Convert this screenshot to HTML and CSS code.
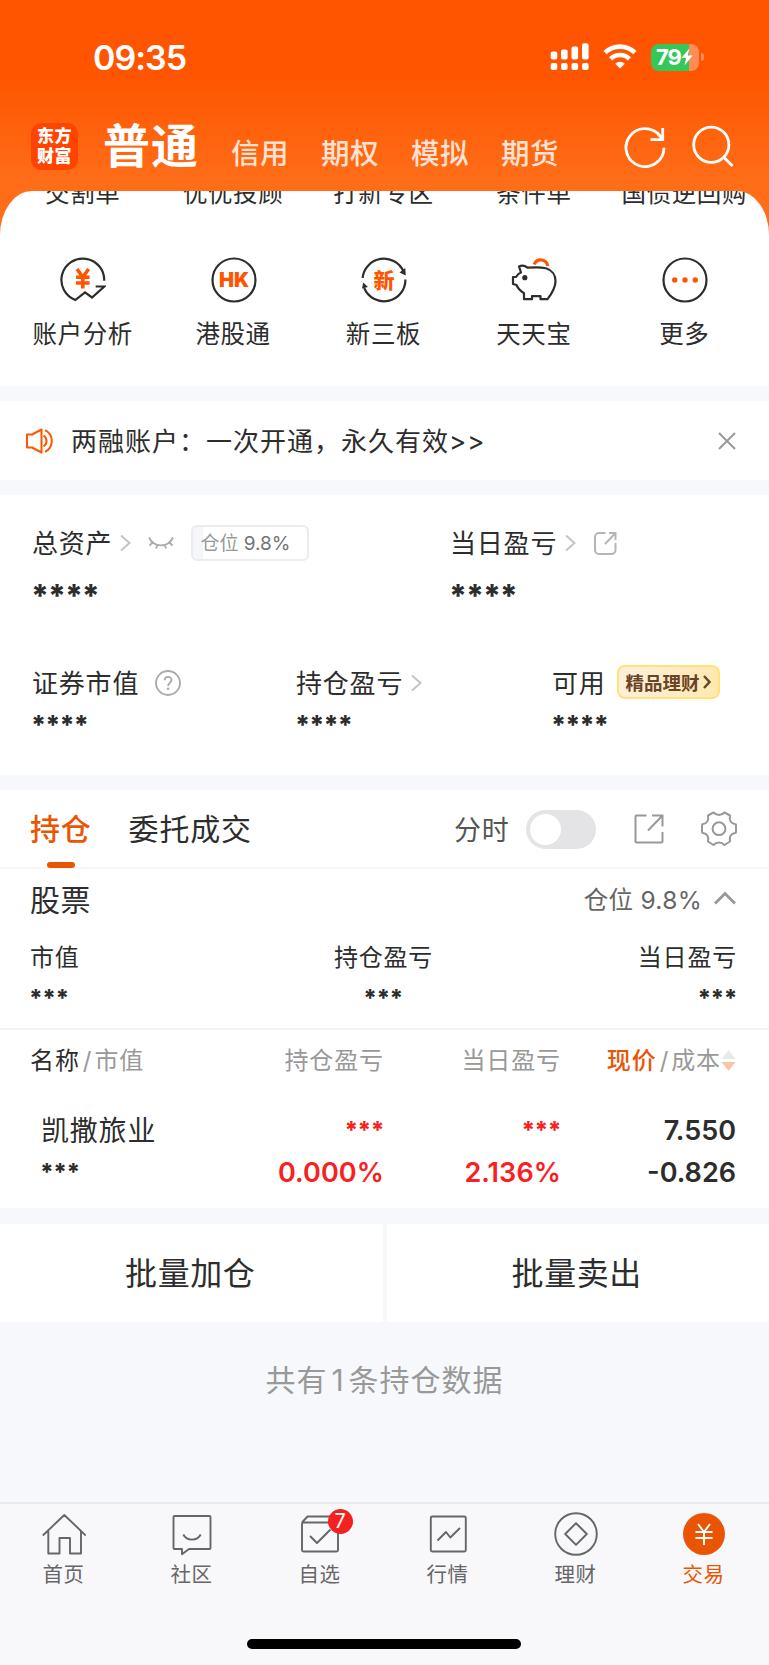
FILE: index.html
```html
<!DOCTYPE html>
<html lang="zh-CN">

<head>
    <meta charset="UTF-8">
    <meta name="viewport" content="width=device-width, initial-scale=1.0">
    <title>交易 - 持仓</title>
    <link rel="stylesheet" href="styles.css">
</head>

<body>

    <header class="header">
        <div class="status">
            <span class="time">09:35</span>
            <svg class="signal" width="40" height="28" viewBox="0 0 40 28" fill="#fff">
                <rect x="0.7" y="8.5" width="6.6" height="8" rx="2"/>
                <rect x="11" y="6.5" width="6.6" height="10" rx="2"/>
                <rect x="21.5" y="3.5" width="6.6" height="13" rx="2"/>
                <rect x="32" y="0.3" width="6.6" height="16.2" rx="2"/>
                <rect x="0.7" y="20" width="6.6" height="7" rx="2"/>
                <rect x="11" y="20" width="6.6" height="7" rx="2"/>
                <rect x="21.5" y="20" width="6.6" height="7" rx="2"/>
                <rect x="32" y="20" width="6.6" height="7" rx="2"/>
            </svg>
            <svg class="wifi" width="34" height="26" viewBox="0 0 34 26" fill="none" stroke="#fff" stroke-width="4.6">
                <path d="M2 8.7a21.5 21.5 0 0 1 30 0"/>
                <path d="M7.6 14.8a13.5 13.5 0 0 1 18.8 0"/>
                <path d="M12.2 19.7a7 7 0 0 1 9.6 0L17 24.6z" fill="#fff" stroke="none"/>
            </svg>
            <div class="battery">
                <span>79</span>
                <svg width="12" height="18" viewBox="0 0 12 18" fill="#fff"><path d="M8.3 0.5L0.4 10h4.7L3.5 17.5 11.6 7.6H6.8z"/></svg>
            </div>
            <i class="nub"></i>
        </div>
        <div class="accounts">
            <div class="logo">东方<br>财富</div>
            <h1>普通</h1>
            <nav class="types">
                <span>信用</span>
                <span>期权</span>
                <span>模拟</span>
                <span>期货</span>
            </nav>
            <svg class="refresh" width="42" height="44" viewBox="0 0 42 44" fill="none" stroke="#fff" stroke-width="2.8">
                <path d="M40 22.7a19 19 0 1 1-4.2-12"/>
                <path d="M38.7 3v11.6H26.5M38.5 14L33.5 8.4"/>
            </svg>
            <svg width="42" height="44" viewBox="0 0 42 44" fill="none" stroke="#fff" stroke-width="2.8">
                <circle cx="19.3" cy="19.7" r="17.6"/>
                <path d="M31.5 32l9 9"/>
            </svg>
        </div>
    </header>

    <section class="menu">
        <div class="menu-row cut">
            <span>交割单</span>
            <span>优优投顾</span>
            <span>打新专区</span>
            <span>条件单</span>
            <span>国债逆回购</span>
        </div>
        <div class="menu-row">
            <div class="item">
                <svg width="46" height="46" viewBox="0 0 46 46" fill="none" stroke="#2d2d2d" stroke-width="2.2">
                    <path d="M44.2 23.8A21.4 21.4 0 1 0 15.3 43L25 35.3l7 5.2 12.3-11h-8.6"/>
                    <path d="M17 12l5.8 8.2L28.6 12M16 20.2h13.6M16 26h13.6M22.8 20v11.5" stroke="#ff5500" stroke-width="3.6"/>
                </svg>
                <span>账户分析</span>
            </div>
            <div class="item">
                <svg width="46" height="46" viewBox="0 0 46 46" fill="none" stroke="#2d2d2d" stroke-width="2.2">
                    <circle cx="23" cy="23" r="21.5"/>
                    <text x="23" y="30" class="mark hk">HK</text>
                </svg>
                <span>港股通</span>
            </div>
            <div class="item">
                <svg width="46" height="46" viewBox="0 0 46 46" fill="none" stroke="#2d2d2d" stroke-width="2.2">
                    <path d="M1.6 21A21.4 21.4 0 0 1 42.5 14.5"/>
                    <path d="M44.4 22.5A21.4 21.4 0 0 1 3.2 31"/>
                    <path d="M38.5 15.5l5.7-4.5.6 7.5zM1 31.5l1.2-6L7 30z" fill="#2d2d2d" stroke="none"/>
                    <text x="23" y="30.5" class="mark">新</text>
                </svg>
                <span>新三板</span>
            </div>
            <div class="item">
                <svg width="46" height="46" viewBox="0 0 46 46" fill="none" stroke="#2d2d2d" stroke-width="2.2" stroke-linejoin="round">
                    <path d="M23.2 7.5a7 7 0 0 1 13.5 1.5" stroke="#ff5500" stroke-width="3.2"/>
                    <path d="M10 15.5l-2-6c3-1.4 6-.8 8.5 1.2 7-.6 13-.7 18.5.5 6 1.8 9.5 7 9.5 13 0 6-3.5 12-8 18h-7v-3H21v3h-8v-6C9.500 34 7 31.500 5.500 28L2 27v-7h3c1.200-2 2.500-3.800 5-4.500z"/>
                    <circle cx="13.8" cy="20.7" r="2.6" fill="#2d2d2d" stroke="none"/>
                </svg>
                <span>天天宝</span>
            </div>
            <div class="item">
                <svg width="46" height="46" viewBox="0 0 46 46" fill="none" stroke="#2d2d2d" stroke-width="2.2">
                    <circle cx="23" cy="23" r="21.5"/>
                    <g fill="#ff5500" stroke="none">
                        <circle cx="12.7" cy="23" r="2.7"/>
                        <circle cx="23" cy="23" r="2.7"/>
                        <circle cx="33.3" cy="23" r="2.7"/>
                    </g>
                </svg>
                <span>更多</span>
            </div>
        </div>
    </section>

    <section class="notice">
        <svg width="28" height="26" viewBox="0 0 28 26" fill="none" stroke="#ff5500" stroke-width="2" stroke-linejoin="round">
            <path d="M2 6.5h5l9.5-5v23l-9.5-5H2z"/>
            <path d="M18.5 7.5a6.5 6.5 0 0 1 0 11M20 2.2a12 12 0 0 1 0 21.6"/>
        </svg>
        <p>两融账户：一次开通，永久有效&gt;&gt;</p>
        <svg width="18" height="18" viewBox="0 0 18 18" fill="none" stroke="#999" stroke-width="2"><path d="M1 1l16 16M17 1L1 17"/></svg>
    </section>

    <section class="assets">
        <div class="total">
            <div class="cell">
                <div class="label"><span>总资产</span>
                    <svg class="more" width="11" height="18" viewBox="0 0 11 18"><path d="M1 1.5l8.5 7.5L1 16.5"/></svg>
                    <svg class="eye" width="26" height="14" viewBox="0 0 26 14" fill="none" stroke="#aaa" stroke-width="1.8">
                        <path d="M1 1.5c5 10.5 19 10.5 24 0M5 6L1.5 9.5M9.5 8.5L8 12.5M16.5 8.5L18 12.5M21 6l3.5 3.5"/>
                    </svg>
                    <div class="ratio">仓位 <b>9.8%</b></div>
                </div>
                <div class="stars big">****</div>
            </div>
            <div class="cell">
                <div class="label"><span>当日盈亏</span>
                    <svg class="more" width="11" height="18" viewBox="0 0 11 18"><path d="M1 1.5l8.5 7.5L1 16.5"/></svg>
                    <svg class="share" width="24" height="24" viewBox="0 0 24 24" fill="none" stroke="#b5b5b5" stroke-width="2">
                        <path d="M12.5 2H6a4 4 0 0 0-4 4v13a4 4 0 0 0 4 4h12.5a4 4 0 0 0 4-4v-7M16 2h6.5v7M22.5 2L12 13"/>
                    </svg>
                </div>
                <div class="stars big">****</div>
            </div>
        </div>
        <div class="detail">
            <div class="cell">
                <div class="label"><span>证券市值</span>
                    <svg class="help" width="26" height="26" viewBox="0 0 26 26" fill="none" stroke="#aaa" stroke-width="1.8">
                        <circle cx="13" cy="13" r="12"/>
                        <path d="M9.7 10.3c0-4.6 6.8-4.6 6.8-.2 0 2.9-3.4 2.9-3.4 6"/>
                        <circle cx="13.1" cy="18.8" r="1.3" fill="#aaa" stroke="none"/>
                    </svg>
                </div>
                <div class="stars">****</div>
            </div>
            <div class="cell">
                <div class="label"><span>持仓盈亏</span>
                    <svg class="more" width="11" height="18" viewBox="0 0 11 18"><path d="M1 1.5l8.5 7.5L1 16.5"/></svg>
                </div>
                <div class="stars">****</div>
            </div>
            <div class="cell">
                <div class="label"><span>可用</span>
                    <div class="promo">精品理财
                        <svg width="8" height="14" viewBox="0 0 8 14" fill="none" stroke="#6b4427" stroke-width="2.4"><path d="M1 1l5.5 6L1 13"/></svg>
                    </div>
                </div>
                <div class="stars">****</div>
            </div>
        </div>
    </section>

    <section class="positions">
        <div class="tabs">
            <span class="tab active">持仓</span>
            <span class="tab">委托成交</span>
            <span class="minute">分时</span>
            <i class="switch"></i>
            <svg class="export" width="30" height="30" viewBox="0 0 30 30" fill="none" stroke="#999" stroke-width="2">
                <path d="M12.5 1.5h-10a1 1 0 0 0-1 1v25a1 1 0 0 0 1 1h25a1 1 0 0 0 1-1V18M18 1.5h10.5v11M28.5 1.5L14 16.5"/>
            </svg>
            <svg width="36" height="36" viewBox="0 0 36 36" fill="none" stroke="#999" stroke-width="2" stroke-linejoin="round">
                <path d="M12.5 1.5c3 3.3 8 3.3 11 0l5.5 3c-1 5 1 8 5 8.5 1 0 1 .5 1 1v7c0 .5 0 1-1 1-4 .5-6 3.5-5 8.5L23.5 34c-3-3.300-8-3.300-11 0L7 30.500c1-5-1-8-5-8.500-1 0-1-.5-1-1v-7c0-.5 0-1 1-1 4-.5 6-3.500 5-8.500z"/>
                <circle cx="18" cy="17.7" r="6.4"/>
            </svg>
        </div>

        <div class="summary">
            <div class="kind">
                <h2>股票</h2>
                <span>仓位 9.8%</span>
                <svg width="22" height="14" viewBox="0 0 22 14" fill="none" stroke="#999" stroke-width="3"><path d="M1 12.5l10-10 10 10"/></svg>
            </div>
            <div class="sums">
                <div>市值<span class="stars small">***</span></div>
                <div>持仓盈亏<span class="stars small">***</span></div>
                <div>当日盈亏<span class="stars small">***</span></div>
            </div>
        </div>

        <div class="row head">
            <div><b>名称</b><i>/</i>市值</div>
            <div>持仓盈亏</div>
            <div>当日盈亏</div>
            <div class="price"><em>现价</em><i>/</i>成本
                <svg width="15" height="22" viewBox="0 0 15 22">
                    <path d="M7.5 0l7 9h-14z" fill="#e8e8e8"/>
                    <path d="M7.5 21l7-9h-14z" fill="#fbc4a6"/>
                </svg>
            </div>
        </div>
        <div class="row stock">
            <div class="name">凯撒旅业<span class="stars small">***</span></div>
            <div class="up"><span class="stars small">***</span>0.000%</div>
            <div class="up"><span class="stars small">***</span>2.136%</div>
            <div class="last">7.550<br>-0.826</div>
        </div>
    </section>

    <div class="batch">
        <button>批量加仓</button>
        <button>批量卖出</button>
    </div>

    <p class="count">共有<span>1</span>条持仓数据</p>

    <footer class="tabbar">
        <a>
            <svg width="44" height="44" viewBox="0 0 44 44">
                <path d="M.8 23.5L22.3 3l21.5 20.5M6.3 19v22.5h11.2V26H28v15.5h11V19"/>
            </svg>
            首页
        </a>
        <a>
            <svg width="44" height="44" viewBox="0 0 44 44">
                <path d="M4.5 4h35a1 1 0 0 1 1 1v31a1 1 0 0 1-1 1H19l-7 5.3V37H4.5a1 1 0 0 1-1-1V5a1 1 0 0 1 1-1z"/>
                <path d="M13.3 22.5c3.5 6.8 13.9 6.8 17.4 0"/>
            </svg>
            社区
        </a>
        <a>
            <svg width="44" height="44" viewBox="0 0 44 44">
                <path d="M4 10.5l5.5-6H34l6 6"/>
                <rect x="4" y="10.5" width="36" height="29" rx="1.5"/>
                <path d="M12 24l7 7 13.5-13.5"/>
            </svg>
            <span class="badge">7</span>
            自选
        </a>
        <a>
            <svg width="44" height="44" viewBox="0 0 44 44">
                <rect x="4.8" y="4.5" width="35" height="35" rx="1.5"/>
                <path d="M11.5 28.5L20 20l4.3 5.5L34 16"/>
            </svg>
            行情
        </a>
        <a>
            <svg width="44" height="44" viewBox="0 0 44 44">
                <circle cx="22" cy="22" r="20.8"/>
                <path d="M22 11.2L32.8 22 22 32.8 11.2 22z"/>
            </svg>
            理财
        </a>
        <a class="current">
            <svg width="44" height="44" viewBox="0 0 44 44">
                <circle cx="22" cy="22" r="21" fill="#ea5504" stroke="none"/>
                <path d="M16 12l6 8 6-8M13.5 20h17M13.5 26h17M22 20v13" stroke="#fff"/>
            </svg>
            交易
        </a>
        <i class="home-bar"></i>
    </footer>

</body>

</html>
```
FILE: styles.css
```css
* {
    box-sizing: border-box;
}

body {
    margin: 0;
    background-color: #f6f8fb;
    color: #2d2d2d;
    font-family: Inter, "Noto Sans CJK SC", sans-serif;
    font-size: 26px;
}

h1, h2, p {
    margin: 0;
    font-weight: normal;
}

i, em {
    font-style: normal;
}

svg {
    flex: none;
    display: block;
}

/* header */
.header {
    height: 250px;
    margin-bottom: -59px;
    background: linear-gradient(#ff5500 75px, #ff6d18 180px);
    color: #fff;
}

.status {
    display: flex;
    align-items: center;
    height: 114px;
    padding-left: 93px;
}

.time {
    width: 457px;
    font-size: 34px;
    font-weight: 600;
    letter-spacing: -1px;
}

.wifi {
    margin-left: 13px;
}

.battery {
    display: flex;
    align-items: center;
    width: 48px;
    height: 27px;
    margin-left: 14px;
    padding-left: 5px;
    border-radius: 8px;
    background: linear-gradient(to right, #34c759 38px, #ff8c55 38px);
    font-size: 22px;
    font-weight: 700;
    letter-spacing: -1px;
}

.nub {
    width: 3px;
    height: 8px;
    margin-left: 2px;
    border-radius: 0 3px 3px 0;
    background-color: #ff8c55;
}

.accounts {
    display: flex;
    align-items: center;
    height: 65px;
    padding-left: 31px;
}

.logo {
    width: 47px;
    height: 47px;
    padding: 4px 0 0 6px;
    border-radius: 10px;
    background-color: #ff4400;
    font-size: 17px;
    font-weight: 900;
    line-height: 19.5px;
    letter-spacing: 0.4px;
}

h1 {
    width: 127px;
    padding: 0 0 2px 25px;
    font-size: 47px;
    font-weight: bold;
    line-height: 62px;
    letter-spacing: 1px;
    white-space: nowrap;
}

.types {
    display: flex;
    width: 395px;
    padding: 15px 0 0 26px;
    color: #ffe2d3;
    font-size: 28.5px;
    font-weight: 500;
    line-height: 36px;
    letter-spacing: 0.5px;
}

.types span {
    width: 90px;
}

.refresh {
    margin: 0 26px 0 24px;
}

/* menu */
.menu {
    position: relative;
    height: 195px;
    overflow: hidden;
    border-radius: 32px 32px 0 0 / 44px 44px 0 0;
    background-color: #fff;
}

.menu-row {
    display: grid;
    grid-template-columns: repeat(5, 150.4px);
    padding-left: 8px;
    font-size: 24.5px;
    line-height: 36px;
    letter-spacing: 0.6px;
    text-align: center;
}

.menu-row span {
    margin-left: -1px;
}

.cut {
    margin: -16px 0 46px;
    white-space: nowrap;
}

.item svg {
    margin: 0 auto 13px;
}

.mark {
    fill: #ff5500;
    stroke: none;
    font-size: 21px;
    font-weight: 900;
    letter-spacing: 0;
    text-anchor: middle;
}

.hk {
    font-size: 20px;
}

/* notice */
.notice {
    display: flex;
    align-items: center;
    height: 79px;
    margin: 15px 0;
    padding: 0 33px 0 25px;
    background-color: #fff;
    letter-spacing: 1px;
}

.notice p {
    flex: 1;
    margin-left: 18px;
    padding-bottom: 2px;
}

/* assets */
.assets {
    height: 280px;
    padding: 30px 0 0 32px;
    background-color: #fff;
}

.total {
    display: grid;
    grid-template-columns: 418px 1fr;
    height: 140px;
}

.detail {
    display: grid;
    grid-template-columns: 264px 256px 1fr;
}

.label {
    display: flex;
    align-items: center;
    height: 36px;
    letter-spacing: 0.8px;
}

.label > span {
    padding-bottom: 4px;
}

.more {
    margin-left: 8px;
    fill: none;
    stroke: #c4c4c4;
    stroke-width: 2;
}

.eye {
    margin-left: 17px;
}

.share {
    margin-left: 17px;
}

.help {
    margin-left: 16px;
}

.ratio {
    width: 118px;
    height: 36px;
    margin-left: 17px;
    padding-left: 7px;
    border: 2px solid #ececef;
    border-radius: 6px;
    background: linear-gradient(to right, #f5f6fa 10px, #fff 10px);
    color: #999;
    font-size: 19px;
    line-height: 33px;
    letter-spacing: 0;
}

.ratio b {
    color: #737373;
    font-weight: normal;
}

.stars {
    display: block;
    margin-left: -1px;
    font-size: 26px;
    font-weight: 800;
    line-height: 30px;
    letter-spacing: -0.9px;
}

.big {
    padding-top: 17px;
    font-size: 31px;
    line-height: 36px;
    letter-spacing: -1.1px;
}

.small {
    font-size: 23.5px;
    letter-spacing: -0.5px;
}

.detail .stars {
    padding-top: 9px;
}

.promo {
    display: flex;
    align-items: center;
    gap: 3px;
    width: 103px;
    height: 34px;
    margin: -2px 0 0 11px;
    padding: 0 0 1px 7px;
    border: 2px solid #ffe27a;
    border-radius: 8px;
    background: linear-gradient(to right, #fdf0dc, #ffe9b0);
    color: #6b4427;
    font-size: 18.5px;
    font-weight: bold;
    letter-spacing: 0;
}

/* positions */
.positions {
    height: 418px;
    margin-top: 15px;
    background-color: #fff;
}

.tabs {
    display: flex;
    align-items: center;
    height: 79px;
    padding: 1px 0 0 30px;
    border-bottom: 2px solid #f6f6f8;
    font-size: 30px;
    letter-spacing: 0.8px;
}

.tab {
    height: 78px;
    margin-right: 37px;
    line-height: 79px;
}

.active {
    position: relative;
    color: #ea5504;
    font-weight: 500;
}

.active::after {
    content: "";
    position: absolute;
    left: 17px;
    bottom: 0;
    width: 28px;
    height: 6px;
    border-radius: 3px;
    background-color: #ea5504;
}

.minute {
    width: 72px;
    margin-left: auto;
    padding-bottom: 2px;
    color: #555;
    font-size: 27px;
}

.switch {
    width: 70px;
    height: 39px;
    padding: 4px;
    border-radius: 20px;
    background-color: #e4e4e6;
}

.switch::before {
    content: "";
    display: block;
    width: 31px;
    height: 31px;
    border-radius: 50%;
    background-color: #fff;
}

.export {
    margin: 0 37px 0 38px;
}

.tabs svg:last-child {
    margin-right: 32px;
}

.summary {
    height: 161px;
    padding: 9px 32px 0 30px;
    border-bottom: 2px solid #f2f2f4;
}

.kind {
    display: flex;
    align-items: center;
    height: 40px;
    color: #666;
    font-size: 24.5px;
    letter-spacing: 0.3px;
}

h2 {
    flex: 1;
    color: #2d2d2d;
    font-size: 30px;
    letter-spacing: 0.5px;
}

.kind svg {
    margin: 0 1px 0 12px;
}

.sums {
    display: grid;
    grid-template-columns: 1fr 1fr 1fr;
    padding-top: 22px;
    font-size: 24px;
    line-height: 36px;
    letter-spacing: 0.8px;
}

.sums .stars {
    padding-top: 7px;
}

.sums div:nth-child(2) {
    text-align: center;
}

.sums div:nth-child(3) {
    text-align: right;
}

.row {
    display: grid;
    grid-template-columns: 192px 162px 177px 175px;
    padding-left: 30px;
    text-align: right;
}

.row div:first-child {
    text-align: left;
}

.head {
    height: 62px;
    color: #999;
    font-size: 24px;
    line-height: 62px;
    letter-spacing: 0.9px;
    white-space: nowrap;
}

.head b {
    color: #2d2d2d;
    font-weight: normal;
}

.head em {
    color: #ea5504;
    font-weight: 500;
}

.head i {
    margin: 0 2px 0 3px;
}

.head .price {
    display: flex;
    align-items: center;
    justify-content: flex-end;
}

.stock {
    padding-top: 18px;
    font-size: 27px;
    font-weight: 600;
    line-height: 42px;
}

.stock .name {
    padding-left: 11px;
    font-size: 28px;
    font-weight: normal;
    letter-spacing: 0.8px;
}

.stock .stars {
    height: 42px;
    line-height: 40px;
}

.up {
    color: #fa2020;
    letter-spacing: 0.1px;
}

/* batch buttons */
.batch {
    display: grid;
    grid-template-columns: 1fr 1fr;
    gap: 4px;
    margin-top: 16px;
}

button {
    height: 98px;
    padding: 0 2px 4px 0;
    border: none;
    background-color: #fff;
    color: #2d2d2d;
    font-family: inherit;
    font-size: 32px;
    letter-spacing: 0.6px;
}

.count {
    height: 180px;
    padding-top: 37px;
    color: #999;
    font-size: 30px;
    line-height: 42px;
    letter-spacing: 1px;
    text-align: center;
}

.count span {
    margin: 0 4px;
}

/* bottom tab bar */
.tabbar {
    position: relative;
    display: grid;
    grid-template-columns: repeat(6, 128px);
    height: 163px;
    border-top: 2px solid #e9eaed;
    background-color: #f8f8fb;
}

.tabbar a {
    position: relative;
    padding: 8px 1px 0 0;
    color: #666;
    font-size: 20.5px;
    line-height: 38px;
    letter-spacing: 0.6px;
    text-align: center;
}

.tabbar svg {
    margin: 0 auto;
    fill: none;
    stroke: #666;
    stroke-width: 1.9;
    stroke-linejoin: round;
}

.tabbar .current {
    color: #ea5504;
}

.badge {
    position: absolute;
    top: 5px;
    left: 72px;
    width: 25px;
    height: 25px;
    border-radius: 50%;
    background-color: #f52020;
    color: #fff;
    font-size: 20px;
    line-height: 25px;
}

.home-bar {
    position: absolute;
    left: 247px;
    bottom: 16px;
    width: 274px;
    height: 10px;
    border-radius: 5px;
    background-color: #000;
}
```
